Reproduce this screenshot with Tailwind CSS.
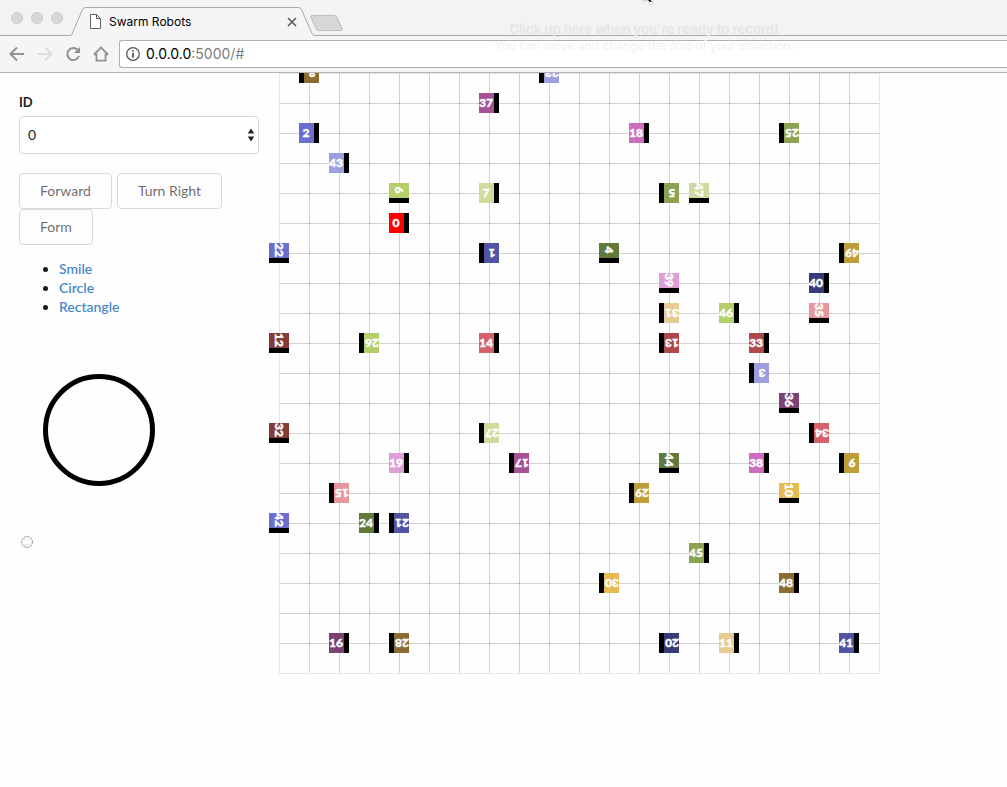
<!DOCTYPE html>
<html lang="en">
<head>
<meta charset="utf-8">
<meta name="viewport" content="width=device-width, initial-scale=1">
<title>Swarm Robots</title>
<script src="https://cdn.jsdelivr.net/npm/@tailwindcss/browser@4"></script>
</head>
<body class="bg-[#fefefe] font-[Lato,'Open_Sans',sans-serif] text-sm text-black/90 overflow-hidden">
<header class="relative z-10 border-b border-[#b4b3b5] bg-[#f3f2f4] font-[Inter,Roboto,sans-serif]">
  <div class="relative flex h-9 items-end border-b border-[#a9a9a9]">
    <svg class="absolute left-0 top-0" width="350" height="36" viewBox="0 0 350 36" fill="none" aria-hidden="true">
      <g fill="#d9d8d9" stroke="#cdcccd">
        <circle cx="17" cy="18" r="5.5"/><circle cx="37" cy="18" r="5.5"/><circle cx="57" cy="18" r="5.5"/>
      </g>
      <path d="M70 36L71.500 34.500L82.500 9.500Q83.500 7.500 85.500 7.500H298.500Q300.500 7.500 301.500 9.500L312 33.500Q313 35.500 315 35.500V36Z" fill="#f5f4f6"/>
      <path d="M70 35.500Q71.500 35.500 72 34L82.500 9.500Q83.500 7.500 85.500 7.500H298.500Q300.500 7.500 301.500 9.500L312 33.500Q313 35.500 315 35.500" stroke="#a9a9a9"/>
      <path d="M312 15.500H334Q336 15.500 337 17.500L342 28.500Q343 30.500 341 30.500H319Q317 30.500 316 28.500L311 17.500Q310 15.500 312 15.500Z" fill="#d7d6d8" stroke="#bebdbe"/>
    </svg>
    <div class="relative ml-[90px] flex h-[27px] w-[207px] items-center text-xs text-black">
      <svg class="mr-2 shrink-0" width="11" height="15" viewBox="0 0 11 15" fill="#fdfdfd" stroke="#626262" aria-hidden="true"><path d="M.5.500H6.500L10.500 4.500V14.500H.5ZM6.500.500V4.500H10.500"/></svg>
      <span>Swarm Robots</span>
      <button class="ml-auto" aria-label="Close tab"><svg width="10" height="10" viewBox="0 0 10 10" stroke="#5a5a5a" stroke-width="1.600"><path d="M1 1L9 9M9 1L1 9"/></svg></button>
    </div>
  </div>
  <div class="flex h-9 items-center bg-[#f5f4f6] pl-[9px]">
    <button aria-label="Back" class="mr-3"><svg width="16" height="16" viewBox="0 0 16 16" fill="none" stroke="#929292" stroke-width="2"><path d="M15 8H2M8 1.500L1.500 8L8 14.500"/></svg></button>
    <button aria-label="Forward" class="mr-3"><svg width="16" height="16" viewBox="0 0 16 16" fill="none" stroke="#dddcde" stroke-width="2"><path d="M1 8H14M8 1.500L14.500 8L8 14.500"/></svg></button>
    <button aria-label="Reload" class="mr-3"><svg width="16" height="16" viewBox="0 0 16 16" fill="none" stroke="#929292" stroke-width="2"><path d="M12.800 4A6 6 0 1 0 14 10"/><path d="M15 1V7H9Z" fill="#929292" stroke="none"/></svg></button>
    <button aria-label="Home" class="mr-2.5"><svg width="16" height="16" viewBox="0 0 16 16" fill="none" stroke="#929292" stroke-width="1.800"><path d="M1 8.500L8 1.500L15 8.500M1 8.500H3.500V14.700H12.500V8.500H15"/></svg></button>
    <div class="flex h-7 grow items-center rounded-l-[3px] border border-r-0 border-[#b0afb1] bg-white pl-1.5">
      <svg class="mr-[6px]" width="14" height="14" viewBox="0 0 14 14" fill="none" stroke="#555" aria-hidden="true"><circle cx="7" cy="7" r="6.300" stroke-width="1.300"/><path d="M7 6V10.500M7 3.200V4.800" stroke-width="1.800"/></svg>
      <span class="text-sm text-black">0.0.0.0<span class="text-[#7c7c7c]">:5000/#</span></span>
    </div>
  </div>
  <div class="absolute left-[458px] top-[20px] w-[372px] text-center">
    <p class="text-[13px] leading-[18px] font-bold text-[#e6e5e7]">Click up here when you're ready to record!</p>
    <p class="text-xs leading-4 text-[#f1f0f3]">You can move and change the size of your selection.</p>
  </div>
  <svg class="absolute left-[642px] top-0" width="12" height="5" viewBox="0 0 12 5" aria-hidden="true"><path d="M0 0L3 1.500L5 0L8.500 4.500L11.500 3L9 0Z" fill="#fff" stroke="#c4c4c4" stroke-width=".8"/><path d="M6 0H8.500L9.500 2H8Z" fill="#000"/></svg>
</header>
<main class="flex">
  <aside class="w-[279px] shrink-0 pl-[19px] pr-5">
    <label for="robot" class="mt-[19px] block text-[13px] leading-5 font-bold">ID</label>
    <div class="relative mt-1">
      <select id="robot" class="block h-[38px] w-full appearance-none rounded border border-[#d8d8e0] bg-white px-2 text-sm"><option>0</option></select>
      <svg class="pointer-events-none absolute right-1 top-3" width="8" height="14" viewBox="0 0 8 14" fill="#222" aria-hidden="true"><path d="M4 .5L7.200 5.500H.8ZM4 13.500L7.200 8.500H.8Z"/></svg>
    </div>
    <div class="mt-[19px] flex flex-wrap gap-x-[5px]">
      <button class="h-9 rounded border border-[#d8d8e0] px-5 text-black/60">Forward</button>
      <button class="h-9 rounded border border-[#d8d8e0] px-5 text-black/60">Turn Right</button>
      <button class="h-9 rounded border border-[#d8d8e0] px-5 text-black/60">Form</button>
    </div>
    <ul class="mt-[14px] list-disc pl-10 leading-[19px] font-medium">
      <li><a href="#" class="text-[#4183c4]">Smile</a></li>
      <li><a href="#" class="text-[#4183c4]">Circle</a></li>
      <li><a href="#" class="text-[#4183c4]">Rectangle</a></li>
    </ul>
    <svg class="ml-6 mt-[58px]" width="112" height="112" viewBox="0 0 112 112" aria-label="Circle formation"><circle cx="56" cy="56" r="53.500" fill="none" stroke="#000" stroke-width="5"/></svg>
    <svg class="ml-0.5 mt-[50px]" width="12" height="12" viewBox="0 0 12 12" fill="none" stroke="#777" stroke-width=".8" aria-label="Smile formation"><circle cx="6" cy="6" r="5.400" stroke-dasharray="2.500 .6"/><path d="M3.500 3.800H4.500M7.500 3.800H8.500M3.500 8.200H4.500M7.500 8.200H8.500M5.500 9H6.500" stroke="#aaa"/></svg>
  </aside>
  <svg id="arena" class="block shrink-0 overflow-visible" width="601" height="601" viewBox="0 0 601 601" font-family="Lato, sans-serif" font-size="12" font-weight="900" aria-label="Robot arena"></svg>
</main>
<script>
const NS = 'http://www.w3.org/2000/svg';
const arena = document.getElementById('arena');
const add = (parent, tag, attrs) => {
  const el = document.createElementNS(NS, tag);
  for (const k in attrs) el.setAttribute(k, attrs[k]);
  return parent.appendChild(el);
};
for (let i = 0; i <= 20; i++) {
  const stroke = i % 20 ? '#d3d3d3' : '#e6e6e6', p = i * 30 + 0.5;
  add(arena, 'path', { d: `M${p} 0V601`, stroke });
  add(arena, 'path', { d: `M0 ${p}H601`, stroke });
}
for (let x = 1; x < 20; x++) for (let y = 1; y < 20; y++)
  add(arena, 'rect', { x: x * 30, y: y * 30, width: 1, height: 1, fill: '#858585' });

const palette = ['#393b79','#5254a3','#6b6ecf','#9c9ede','#637939','#8ca252','#b5cf6b','#cedb9c','#8c6d31','#bd9e39','#e7ba52','#e7cb94','#843c39','#ad494a','#d6616b','#e7969c','#7b4173','#a55194','#ce6dbd','#de9ed6'];
// id, column, row, heading in degrees
const robots = [
  [8,1,0,180],[23,9,0,180],[37,7,1,0],[2,1,2,0],[18,12,2,0],[25,17,2,180],[43,2,3,0],
  [6,4,4,90],[7,7,4,0],[5,13,4,180],[47,14,4,90],[0,4,5,0],[22,0,6,90],[1,7,6,180],
  [4,11,6,90],[49,19,6,180],[39,13,7,90],[40,18,7,0],[31,13,8,180],[46,15,8,0],[35,18,8,90],
  [12,0,9,90],[26,3,9,180],[14,7,9,0],[13,13,9,180],[33,16,9,0],[3,16,10,180],[36,17,11,90],
  [32,0,12,90],[27,7,12,180],[34,18,12,180],[19,4,13,0],[17,8,13,180],[44,13,13,90],
  [38,16,13,0],[9,19,13,180],[15,2,14,180],[29,12,14,180],[10,17,14,90],[42,0,15,90],
  [24,3,15,0],[21,4,15,180],[45,14,16,0],[30,11,17,180],[48,17,17,0],[16,2,19,0],
  [28,4,19,180],[20,13,19,180],[11,15,19,0],[41,19,19,0]
];
for (const [id, x, y, a] of robots) {
  const g = add(arena, 'g', { transform: `translate(${x * 30} ${y * 30}) rotate(${a})` });
  add(g, 'rect', { x: -10, y: -10, width: 20, height: 20, fill: id ? palette[id % 20] : '#ff0000' });
  add(g, 'rect', { x: 5, y: -10, width: 5, height: 20, fill: '#000' });
  add(g, 'text', { x: -3, y: 4, 'text-anchor': 'middle', fill: '#fff', stroke: '#fff', 'stroke-width': 0.4 }).textContent = id;
}
</script>
</body>
</html>
